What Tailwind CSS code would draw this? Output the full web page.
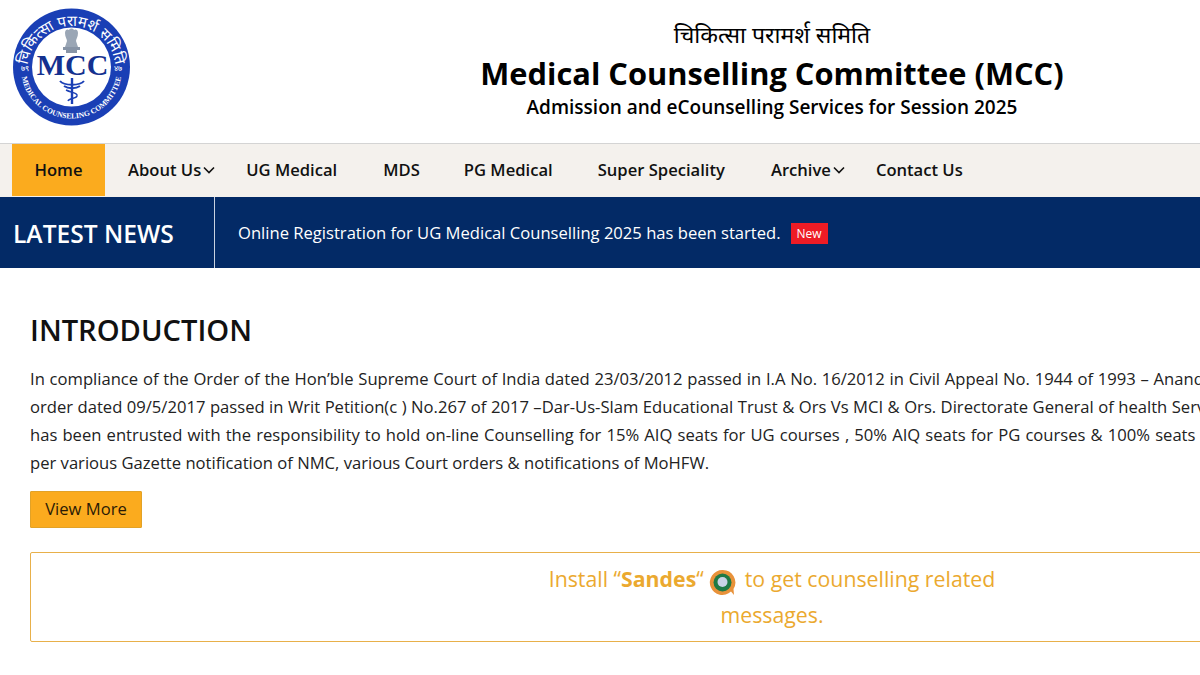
<!DOCTYPE html>
<html lang="en">

<head>
    <meta charset="UTF-8">
    <meta name="viewport" content="width=device-width, initial-scale=1.0">
    <title>Medical Counselling Committee (MCC)</title>
    <script src="https://cdn.jsdelivr.net/npm/@tailwindcss/browser@4"></script>
</head>

<body class="w-[1200px] h-[675px] overflow-hidden bg-white text-black font-['Open_Sans',sans-serif]">
    <div class="w-[1544px]">
        <!-- header -->
        <header class="h-[144px] relative flex flex-col items-center border-b border-[#d4d4d4]">
            <svg class="absolute left-[12px] top-[8px]" width="119" height="118" viewBox="0 0 119 118">
                <defs>
                    <path id="top" d="M 15.5 62 A 44 44 0 0 1 103.5 62" />
                    <path id="bottom" d="M 9 60 A 50.5 50.5 0 0 0 110 60" />
                </defs>
                <circle cx="59.5" cy="59" r="58.5" fill="#1a3fb5" />
                <circle cx="59.5" cy="59" r="39.5" fill="#fff" />
                <text font-size="15" fill="#fff" font-family="'Noto Sans','Liberation Serif',serif"><textPath href="#top" startOffset="50%" text-anchor="middle">चिकित्सा परामर्श समिति</textPath></text>
                <text font-size="7.6" font-weight="700" fill="#fff" font-family="'Liberation Serif',serif"><textPath href="#bottom" startOffset="50%" text-anchor="middle">MEDICAL COUNSELING COMMITTEE</textPath></text>
                <!-- emblem -->
                <path d="M 53 25 C 53 21 56 21 57 22 C 58 20 61 20 62 22 C 63 21 66 21 66 25 C 66 29 64 31 64 33 L 66 39 H 53 L 55 33 C 55 31 53 29 53 25 Z" fill="#9aa6b5" />
                <path d="M 51 39 H 68 V 42 H 65 V 45 H 54 V 42 H 51 Z" fill="#8794a6" />
                <text x="60.5" y="67" text-anchor="middle" font-size="30" font-weight="700" fill="#14318f" font-family="'Liberation Serif',serif">MCC</text>
                <!-- caduceus -->
                <path d="M 60 70 V 96" stroke="#1a3fb5" stroke-width="2.4" fill="none" />
                <path d="M 48 73 C 52 78 68 78 72 73 M 52 78 C 56 81 64 81 68 78" stroke="#1a3fb5" stroke-width="2" fill="none" />
                <path d="M 54 82 C 60 85 66 85 65 88 C 64 91 57 90 56 93" stroke="#1a3fb5" stroke-width="1.4" fill="none" />
                <text x="13" y="63" font-size="8" fill="#fff" text-anchor="middle" font-family="'Liberation Serif',serif">७९</text>
                <text x="106" y="63" font-size="8" fill="#fff" text-anchor="middle" font-family="'Liberation Serif',serif">४७</text>
            </svg>
            <p class="mt-[18px] h-[33px] text-[23px] leading-[33px] font-['Noto_Sans','Liberation_Serif',serif]">चिकित्सा परामर्श समिति</p>
            <h1 class="mt-[2px] text-[30.8px] leading-[40px] font-bold">Medical Counselling Committee (MCC)</h1>
            <p class="mt-[1px] text-[19px] leading-[26px] font-semibold">Admission and eCounselling Services for Session 2025</p>
        </header>

        <!-- nav -->
        <nav class="h-[53px] bg-[#f4f1ed] pl-[12px] flex text-[#111] text-[16.6px] font-semibold">
            <a class="w-[93px] h-[52px] bg-[#fbab1e] flex items-center justify-center">Home</a>
            <a class="ml-[23px] flex items-center h-[52px]">About Us
                <svg class="ml-[2px]" width="12" height="8" viewBox="0 0 12 8" fill="none" stroke="#111" stroke-width="1.6"><path d="M 1 1.5 L 6 6.5 L 11 1.5" /></svg>
            </a>
            <a class="ml-[31px] flex items-center h-[52px]">UG Medical</a>
            <a class="ml-[46px] flex items-center h-[52px]">MDS</a>
            <a class="ml-[44px] flex items-center h-[52px]">PG Medical</a>
            <a class="ml-[45px] flex items-center h-[52px]">Super Speciality</a>
            <a class="ml-[46px] flex items-center h-[52px]">Archive
                <svg class="ml-[2px]" width="12" height="8" viewBox="0 0 12 8" fill="none" stroke="#111" stroke-width="1.6"><path d="M 1 1.5 L 6 6.5 L 11 1.5" /></svg>
            </a>
            <a class="ml-[31px] flex items-center h-[52px]">Contact Us</a>
        </nav>

        <!-- latest news -->
        <div class="h-[71px] bg-[#032a66] flex items-center text-white">
            <div class="w-[215px] h-full pl-[13px] pt-[3px] border-r border-[#c9d2e0] flex items-center text-[24.6px] font-semibold">LATEST NEWS</div>
            <p class="ml-[23px] mt-[1px] text-[16.6px]">Online Registration for UG Medical Counselling 2025 has been started.</p>
            <span class="ml-[10px] mt-[2px] w-[37px] h-[21px] bg-[#ee1c25] text-[12px] flex items-center justify-center">New</span>
        </div>

        <!-- introduction -->
        <main class="pl-[30px] pr-[30px]">
            <h2 class="mt-[42px] text-[29.1px] leading-[40px] font-semibold text-[#111]">INTRODUCTION</h2>
            <div class="mt-[15px] text-[16.62px] leading-[28px] text-[#222] whitespace-nowrap">
                <p class="[word-spacing:0.43px]">In compliance of the Order of the Hon’ble Supreme Court of India dated 23/03/2012 passed in I.A No. 16/2012 in Civil Appeal No. 1944 of 1993 – Anand Kumar</p>
                <p class="[word-spacing:0.15px]">order dated 09/5/2017 passed in Writ Petition(c ) No.267 of 2017 –Dar-Us-Slam Educational Trust &amp; Ors Vs MCI &amp; Ors. Directorate General of health Services</p>
                <p class="[word-spacing:0.8px]">has been entrusted with the responsibility to hold on-line Counselling for 15% AIQ seats for UG courses , 50% AIQ seats for PG courses &amp; 100% seats in DM</p>
                <p>per various Gazette notification of NMC, various Court orders &amp; notifications of MoHFW.</p>
            </div>
            <a class="mt-[14px] w-[112px] h-[37px] bg-[#fbab1e] border border-[#e2a227] rounded-[1px] text-[16.6px] text-[#2a1a05] flex items-center justify-center">View More</a>

            <div class="mt-[24px] h-[90px] border border-[#e8b04a] rounded-[2px] flex flex-col items-center text-[#eba92f] text-[21.3px]">
                <p class="mt-[8px] leading-[36px] flex items-center whitespace-pre">Install “<b class="font-bold">Sandes</b>“ <svg class="mr-[3px] mt-[6px]" width="27" height="27" viewBox="0 0 27 27"><path d="M 13.5 1 A 12.5 12.5 0 1 0 22 22.5 L 25 26 L 24.5 20 A 12.5 12.5 0 0 0 13.5 1 Z" fill="#e8923a" /><circle cx="13.5" cy="13.5" r="9" fill="#1f7a45" /><circle cx="13.5" cy="13" r="5" fill="#c9d3e6" /></svg> to get counselling related</p>
                <p class="leading-[36px]">messages.</p>
            </div>
        </main>
    </div>
</body>

</html>
